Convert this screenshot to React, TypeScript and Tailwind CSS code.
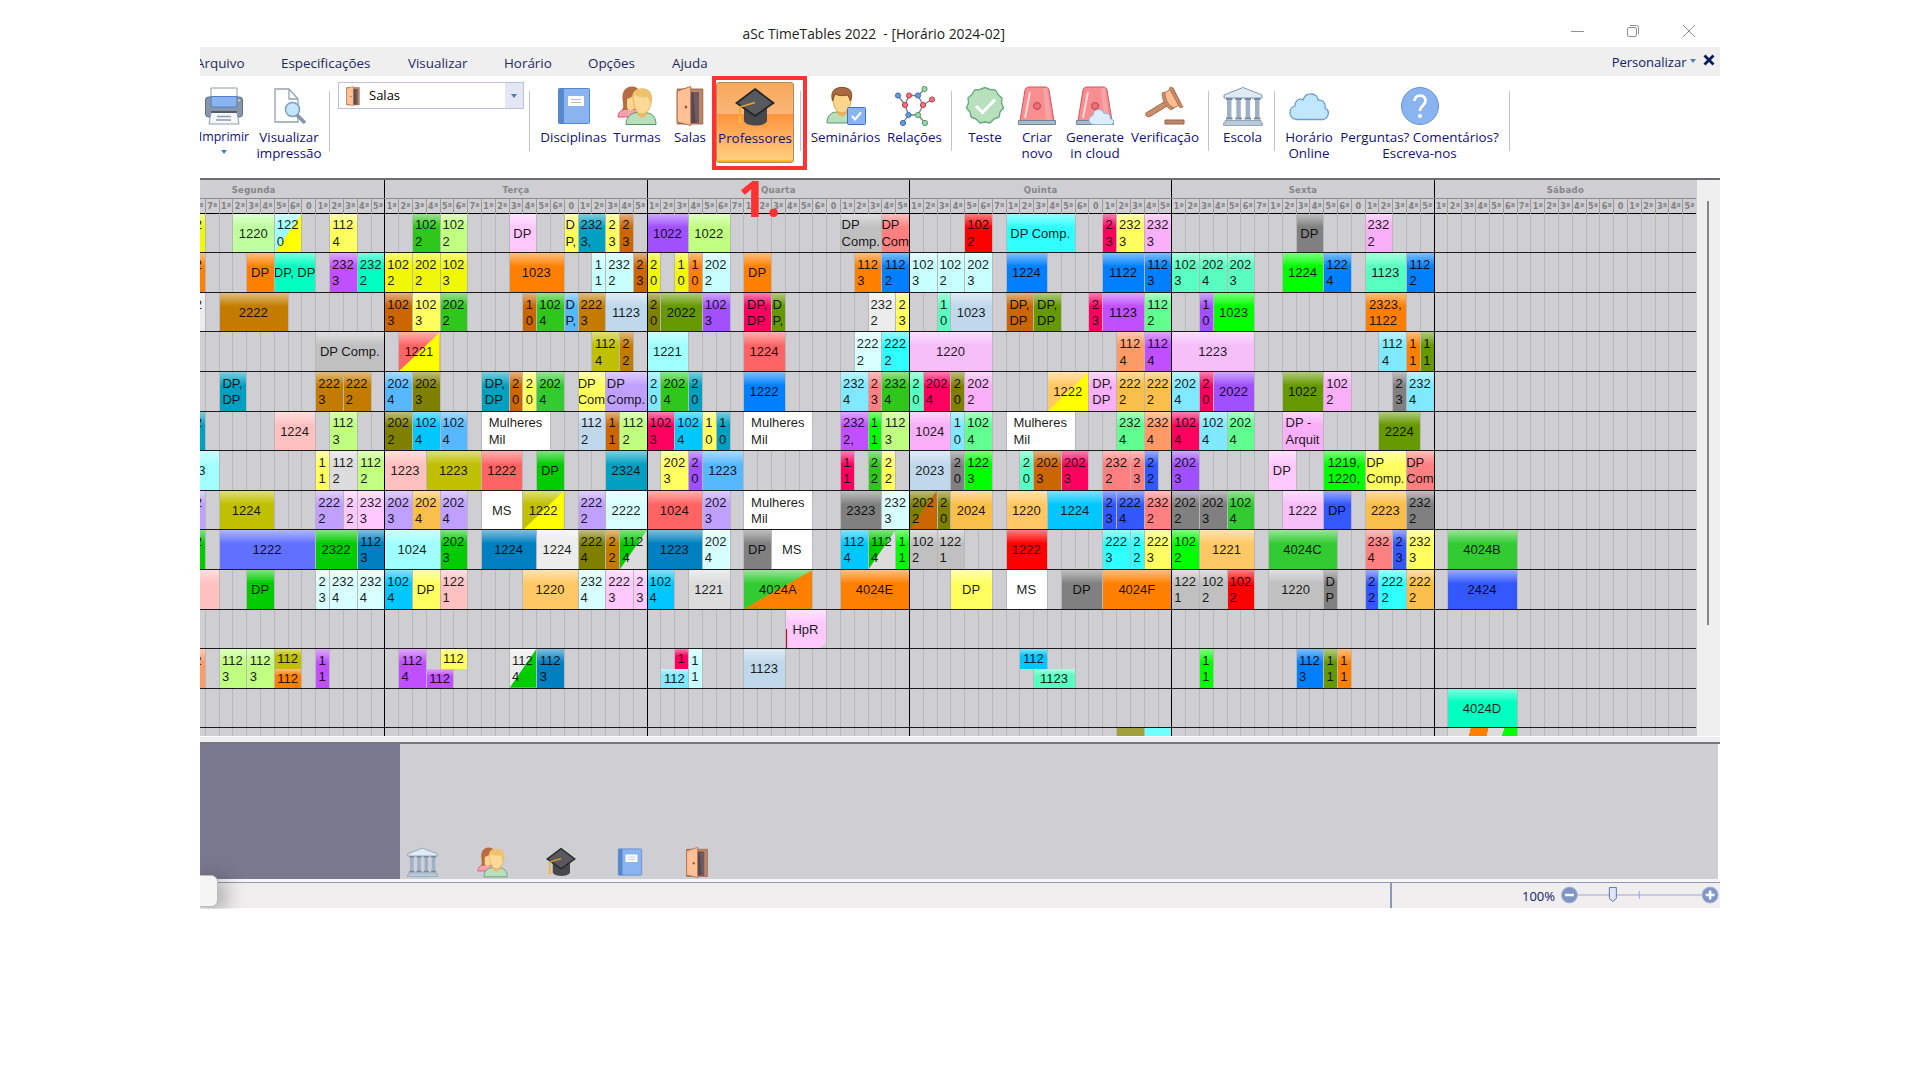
import React from "react";

/* Colour keys used by the timetable cards */
const BG: Record<string, string> = {
  y: "bg-[#f0f808]", g: "bg-[#bfff9f]", Y: "bg-[#ffff60]", G: "bg-[#2fc71c]", l: "bg-[#c0ff80]", p: "bg-[#ffc8ff]",
  t: "bg-[#00a0c0]", b: "bg-[#cc6600]", v: "bg-[#a050ff]", s: "bg-[#c0c0c0]", r: "bg-[#ff8080]", R: "bg-[#ff0000]",
  c: "bg-[#30ffff]", m: "bg-[#ff0060]", k: "bg-[#fab0f8]", d: "bg-[#808080]", o: "bg-[#ff8000]", a: "bg-[#00ffc0]",
  V: "bg-[#c050ff]", i: "bg-[#c8ffff]", u: "bg-[#0080ff]", q: "bg-[#58ffc0]", L: "bg-[#00ff00]", w: "bg-[#ececec]",
  n: "bg-[#c47c00]", B: "bg-[#58b8ff]", e: "bg-[#c0d8ec]", O: "bg-[#808000]", M: "bg-[#669900]", j: "bg-[#60ff90]",
  f: "bg-[#ff6464]", z: "bg-[#ffff00]", C: "bg-[#c0c000]", A: "bg-[#a0ffff]", I: "bg-[#d8ffff]", K: "bg-[#f6bffa]",
  h: "bg-[#ff9966]", x: "bg-[#80e8ff]", E: "bg-[#32cc32]", P: "bg-[#c0a0ff]", N: "bg-[#ffc864]", T: "bg-[#fabe4b]",
  F: "bg-[#ffc0c0]", S: "bg-[#00c8ff]", W: "bg-[#ffffff]", D: "bg-[#dcdcdc]", H: "bg-[#00cc00]", U: "bg-[#3358ff]",
  J: "bg-[#6070ff]", Q: "bg-[#0080c0]",
};

/* One entry per room; days split by " ; ", cards by " / ": start end colour(s) text.
   A ^ or _ after the colour puts the card in the upper or lower half of the row. */
const ROWS: string[] = [
  "4 6 y 102|2 / 8 11 g 1220 / 11 13 Az 122|0 / 15 17 Y 112|4 ; 2 4 G 102|2 / 4 6 l 102|2 / 9 11 p DP / 13 14 Y D|P, / 14 16 t 232|3, / 16 17 Y 2|3 / 17 18 b 2|3 ; 0 3 v 1022 / 3 6 l 1022 / 14 17 s DP|Comp. / 17 19 r DP|Com ; 4 6 R 102|2 / 7 12 c DP Comp. / 14 15 m 2|3 / 15 17 Y 232|3 / 17 19 k 232|3 ; 9 11 d DP / 14 16 k 232|2 ; ",
  "4 6 o 102|2 / 9 11 o DP / 11 14 a DP, DP / 15 17 V 232|3 / 17 19 a 232|2 ; 0 2 y 102|2 / 2 4 y 202|2 / 4 6 y 102|3 / 9 13 o 1023 / 15 16 i 1|1 / 16 18 i 232|2 / 18 19 b 2|3 ; 0 1 y 2|0 / 2 3 y 1|0 / 3 4 o 1|0 / 4 6 i 202|2 / 7 9 o DP / 15 17 o 112|3 / 17 19 u 112|2 ; 0 2 i 102|3 / 2 4 i 102|2 / 4 6 i 202|3 / 7 10 u 1224 / 14 17 u 1122 / 17 19 u 112|3 ; 0 2 q 102|3 / 2 4 q 202|4 / 4 6 q 202|3 / 8 11 L 1224 / 11 13 u 122|4 / 14 17 q 1123 / 17 19 u 112|2 ; ",
  "4 6 w 102|2 / 7 12 n 2222 ; 0 2 b 102|3 / 2 4 Y 102|3 / 4 6 G 202|2 / 10 11 b 1|0 / 11 13 G 102|4 / 13 14 B D|P, / 14 16 n 222|3 / 16 19 e 1123 ; 0 1 O 2|0 / 1 4 M 2022 / 4 6 v 102|3 / 7 9 m DP,|DP / 9 10 M D|P, / 16 18 w 232|2 / 18 19 Y 2|3 ; 2 3 q 1|0 / 3 6 e 1023 / 7 9 b DP,|DP / 9 11 M DP,|DP / 13 14 m 2|3 / 14 17 V 1123 / 17 19 j 112|2 ; 2 3 v 1|0 / 3 6 L 1023 / 14 17 o 2323,|1122 ; ",
  "14 19 s DP Comp. ; 1 4 fz 1221 / 15 17 C 112|4 / 17 18 n 2|2 ; 0 3 A 1221 / 7 10 f 1224 / 15 17 I 222|2 / 17 19 c 222|2 ; 0 6 K 1220 / 15 17 h 112|4 / 17 19 V 112|4 ; 0 6 K 1223 / 15 17 x 112|4 / 17 18 o 1|1 / 18 19 M 1|1 ; ",
  "7 9 t DP,|DP / 14 16 n 222|3 / 16 18 n 222|2 ; 0 2 B 202|4 / 2 4 O 202|3 / 7 9 t DP,|DP / 9 10 b 2|0 / 10 11 Y 2|0 / 11 13 E 202|4 / 14 16 Y DP|Com / 16 19 P DP|Comp. ; 0 1 x 2|0 / 1 3 G 202|4 / 3 4 t 2|0 / 7 10 u 1222 / 14 16 x 232|4 / 16 17 r 2|3 / 17 19 G 232|4 ; 0 1 q 2|0 / 1 3 m 202|4 / 3 4 O 2|0 / 4 6 k 202|2 / 10 13 Nz 1222 / 13 15 k DP,|DP / 15 17 T 222|2 / 17 19 T 222|2 ; 0 2 x 202|4 / 2 3 m 2|0 / 3 6 v 2022 / 8 11 M 1022 / 11 13 k 102|2 / 16 17 d 2|3 / 17 19 x 232|4 ; ",
  "4 6 t 102|2 / 11 14 F 1224 / 15 17 l 112|3 ; 0 2 O 202|2 / 2 4 S 102|4 / 4 6 B 102|4 / 7 12 W Mulheres|Mil / 14 16 e 112|2 / 16 17 b 1|1 / 17 19 l 112|2 ; 0 2 m 102|3 / 2 4 S 102|4 / 4 5 Y 1|0 / 5 6 t 1|0 / 7 12 W Mulheres|Mil / 14 16 V 232|2, / 16 17 L 1|1 / 17 19 l 112|3 ; 0 3 k 1024 / 3 4 x 1|0 / 4 6 j 102|4 / 7 12 W Mulheres|Mil / 15 17 j 232|4 / 17 19 h 232|4 ; 0 2 m 102|4 / 2 4 x 102|4 / 4 6 j 202|4 / 8 11 k DP -|Arquit / 15 18 M 2224 ; ",
  "3 7 A 1223 / 14 15 Y 1|1 / 15 17 D 112|2 / 17 19 l 112|2 ; 0 3 F 1223 / 3 7 C 1223 / 7 10 f 1222 / 11 13 H DP / 16 19 t 2324 ; 1 3 Y 202|3 / 3 4 v 2|0 / 4 7 B 1223 / 14 15 m 1|1 / 16 17 G 2|2 / 17 18 Y 2|2 ; 0 3 e 2023 / 3 4 d 2|0 / 4 6 L 122|3 / 8 9 q 2|0 / 9 11 b 202|3 / 11 13 m 202|3 / 14 16 r 232|2 / 16 17 r 2|3 / 17 18 U 2|2 ; 0 2 v 202|3 / 7 9 p DP / 11 14 L 1219,|1220, / 14 17 Y DP|Comp. / 17 19 r DP|Com ; ",
  "4 6 P 222|2 / 7 11 C 1224 / 14 16 P 222|2 / 16 17 p 2|2 / 17 19 p 232|3 ; 0 2 P 202|3 / 2 4 T 202|4 / 4 6 P 202|4 / 7 10 W MS / 10 13 Cz 1222 / 14 16 P 222|2 / 16 19 I 2222 ; 0 4 f 1024 / 4 6 P 202|3 / 7 12 W Mulheres|Mil / 14 17 d 2323 / 17 19 I 232|3 ; 0 2 Ob 202|2 / 2 3 O 2|0 / 3 6 T 2024 / 7 10 N 1220 / 10 14 S 1224 / 14 15 U 2|3 / 15 17 U 222|4 / 17 19 r 232|2 ; 0 2 d 202|2 / 2 4 d 202|3 / 4 6 E 102|4 / 8 11 K 1222 / 11 13 U DP / 14 17 T 2223 / 17 19 d 232|2 ; ",
  "4 6 H 202|2 / 7 14 J 1222 / 14 17 H 2322 / 17 19 Q 112|3 ; 0 4 A 1024 / 4 6 H 202|3 / 7 11 Q 1224 / 11 14 w 1224 / 14 16 O 222|4 / 16 17 n 2|2 / 17 19 HD 112|4 ; 0 4 Q 1223 / 4 6 I 202|4 / 7 9 d DP / 9 12 W MS / 14 16 S 112|4 / 16 18 HD 112|4 / 18 19 L 1|1 ; 0 2 s 102|2 / 2 4 s 122|1 / 7 10 R 1222 / 14 16 c 222|3 / 16 17 c 2|2 / 17 19 Y 222|3 ; 0 2 L 102|2 / 2 6 N 1221 / 7 12 E 4024C / 14 16 r 232|4 / 16 17 U 2|3 / 17 19 Y 232|3 ; 1 6 E 4024B",
  "3 7 F / 9 11 H DP / 14 15 I 2|3 / 15 17 I 232|4 / 17 19 I 232|4 ; 0 2 S 102|4 / 2 4 Y DP / 4 6 F 122|1 / 10 14 N 1220 / 14 16 I 232|4 / 16 18 p 222|3 / 18 19 p 2|3 ; 0 2 S 102|4 / 3 6 D 1221 / 7 12 Eo 4024A / 14 19 o 4024E ; 3 6 Y DP / 7 10 W MS / 11 14 d DP / 14 19 o 4024F ; 0 2 s 122|1 / 2 4 s 102|2 / 4 6 R 102|2 / 7 11 s 1220 / 11 12 d D|P / 14 15 U 2|2 / 15 17 c 222|2 / 17 19 T 222|2 ; 1 6 U 2424",
  " ; ; 10 13 p HpR ; ; ; ",
  "4 6 h 112|2 / 7 9 l 112|3 / 9 11 l 112|3 / 11 13 C^ 112 / 11 13 o_ 112 / 14 15 V 1|1 ; 1 3 V 112|4 / 3 5 V_ 112 / 4 6 Y^ 112 / 9 11 wH 112|4 / 11 13 Q 112|3 ; 1 3 x_ 112 / 2 3 m^ 1 / 3 4 i 1|1 / 7 10 e 1123 ; 8 10 S^ 112 / 9 12 q_ 1123 ; 2 3 L 1|1 / 9 11 u 112|3 / 11 12 M 1|1 / 12 13 o 1|1 ; ",
  " ; ; ; ; ; 1 6 a 4024D",
];

const DAYS = ["Segunda", "Terça", "Quarta", "Quinta", "Sexta", "Sábado"];
const SLOTS = ["1", "2", "3", "4", "5", "6", "7", "1", "2", "3", "4", "5", "6", "0", "1", "2", "3", "4", "5"];

type CardData = { col: number; span: number; colors: string; half: string; lines: string[] };

function parseRow(row: string): CardData[] {
  return row.split(";").flatMap((day, d) =>
    day
      .split(" / ")
      .map((s) => s.trim())
      .filter(Boolean)
      .map((s) => {
        const [a, b, key, ...rest] = s.split(" ");
        return {
          col: d * 19 + Number(a) + 1,
          span: Number(b) - Number(a),
          colors: key.replace(/[\^_]/g, ""),
          half: key.includes("^") ? "^" : key.includes("_") ? "_" : "",
          lines: rest.join(" ").split("|"),
        };
      })
  );
}

function Card({ card }: { card: CardData }) {
  const place = card.half === "^" ? "self-start h-1/2" : card.half === "_" ? "self-end h-1/2" : "h-full";
  const hpr = card.lines[0] === "HpR";
  return (
    <div
      className={`relative ml-px flex min-w-0 items-center justify-center overflow-hidden ${place} ${BG[card.colors[0]]}`}
      style={{ gridColumn: `${card.col} / span ${card.span}`, gridRow: 1 }}
    >
      <div className="absolute inset-0 bg-linear-to-b from-white/50 to-transparent to-35%" />
      {card.colors[1] && (
        <div className={`absolute inset-0 [clip-path:polygon(100%_0,100%_100%,0_100%)] ${BG[card.colors[1]]}`} />
      )}
      {hpr && (
        <>
          <div className="absolute bottom-0 left-0 h-1/2 w-px bg-red-600" />
          <div className="absolute right-0 bottom-0 size-[6px] bg-[#cfced3] [clip-path:polygon(100%_0,100%_100%,0_100%)]" />
        </>
      )}
      <div className="relative pt-[1.500px] pr-px text-[13px] leading-[16.3px] whitespace-nowrap text-black/90">
        {card.lines.map((l, i) => (
          <div key={i}>{l}</div>
        ))}
      </div>
    </div>
  );
}

/* ---------- icons ---------- */
const Svg = ({ children, cls = "size-[40px]", box = "0 0 40 40" }: { children: React.ReactNode; cls?: string; box?: string }) => (
  <svg viewBox={box} preserveAspectRatio="none" className={`block shrink-0 ${cls}`} fill="none">{children}</svg>
);

const Printer = () => (
  <Svg>
    <path d="M7 2h26v10H7z" fill="#fff" stroke="#8c9cad" />
    <rect x="1.500" y="11" width="37" height="20" rx="3" fill="#8796ab" stroke="#5f7084" />
    <path d="M7 10.500h26v8a2.500 2.500 0 0 1-2.500 2.500h-21a2.500 2.500 0 0 1-2.500-2.500z" fill="#8ab4f0" stroke="#4c7fc8" />
    <circle cx="35" cy="14.500" r="1" fill="#ffe27a" />
    <path d="M7 26h26l2 12H5z" fill="#f6f8fa" stroke="#8c9cad" />
    <path d="M7 26h26" stroke="#4f5d6c" strokeWidth="2" />
    <path d="M13 30.500h14M12 34h15" stroke="#8c9cad" strokeWidth="1.500" />
  </Svg>
);
const Preview = () => (
  <Svg>
    <path d="M6 3h14l9 10v23H6z" fill="#fff" stroke="#93a1b0" strokeWidth="1.300" />
    <path d="M20 3v10h9" stroke="#93a1b0" strokeWidth="1.300" />
    <path d="m28 29 8 8" stroke="#8594a8" strokeWidth="3.500" />
    <circle cx="23.500" cy="23.500" r="7" fill="#c3e6fd" stroke="#7e9cc0" strokeWidth="1.500" />
  </Svg>
);
const Book = ({ cls }: { cls?: string }) => (
  <Svg cls={cls}>
    <rect x="4.500" y="2.500" width="31" height="35" rx="1" fill="#8ab4ef" stroke="#5486cc" />
    <path d="M4.500 2.500H10v35H4.500z" fill="#5688cd" />
    <rect x="14" y="10" width="16" height="10" fill="#fff" />
    <path d="M17 13.500h10M17 16.500h10" stroke="#a9bfdb" />
  </Svg>
);
const People = ({ cls }: { cls?: string }) => (
  <Svg cls={cls}>
    <path d="M1 31c0-6 5-8 11-8l10 1v7z" fill="#f7a3ad" stroke="#d9556b" />
    <path d="M5 24C8 19 4 14 6 7 9-2 21-1 23 6c3 8 0 14-5 17z" fill="#b86b42" />
    <path d="M10 13c4-1 6-4 9-4v13l-6 3-3-3z" fill="#fbd58b" />
    <path d="M9 38.500c0-8 5-11 10-12h10c6 1 10 4 10 12z" fill="#b9e0bd" stroke="#559568" />
    <path d="M20 24v5l5 3 5-3v-5z" fill="#eeb968" />
    <path d="M16 13C15 6 19 3 24 3c9-1 12 6 10 14-1 6-4 11-9 11s-8-6-9-15z" fill="#fdd998" stroke="#dfb565" />
    <path d="M15.500 14C14 3 23 2 28 3c7 1 7 9 5 15l-2-7c-5 1-11 0-13-2z" fill="#ecc36c" />
  </Svg>
);
const Door = ({ cls }: { cls?: string }) => (
  <Svg cls={cls}>
    <path d="M4 3h32v35H4z" fill="#bf8769" stroke="#955f44" />
    <path d="M12 6h19v31H12z" fill="#55474c" />
    <path d="M24 6h7v31h-4z" fill="#6e5a60" />
    <path d="M4 5 21 .500V39.500L4 36z" fill="#ffc096" stroke="#a86748" />
    <circle cx="15" cy="21" r="1.600" fill="#8c5438" />
  </Svg>
);
const Cap = ({ cls }: { cls?: string }) => (
  <Svg cls={cls}>
    <path d="M9 20v14c2 6 21 6 23 0V20z" fill="#47484b" />
    <path d="M20 2 38.500 16 20 29 1.500 16z" fill="#58595c" stroke="#232426" strokeWidth="1.700" />
    <path d="M20 15.500 5 20v14" stroke="#e9a42c" strokeWidth="1.600" />
    <path d="m5 24-1.800 12h4z" fill="#f5b43c" />
  </Svg>
);
const Seminar = () => (
  <Svg>
    <path d="M1 37c0-8 5-11 10-11h10c5 0 9 3 9 11z" fill="#b9e0bd" stroke="#559568" />
    <path d="M11 22v6l5 3 5-3v-6z" fill="#e9b560" />
    <path d="M7 13c0-7 3-9 9-9 7 0 9 3 9 9 0 8-4 14-9 14S7 21 7 13z" fill="#fbd58b" stroke="#d6a557" />
    <path d="M6.500 15C4 5 9 1 17 1.500 26 2 27 8 24.500 15L22 9c-5 1-9 1-13-1z" fill="#a9693f" stroke="#854c29" />
    <rect x="21.500" y="21.500" width="18" height="17" rx="1" fill="#8ab4f5" stroke="#3f71bd" />
    <path d="m26 30 3 3.500 6-7" stroke="#fff" strokeWidth="2" />
  </Svg>
);
const Relations = () => (
  <Svg>
    <path d="M3 9.500 10 19M14 9.500h9M30 3l-7 6.500M37 13.500 28 19M10 19l4-9.500M23 9.500 28 19M10 19l3.500 10M28 19l-5 10M13.500 29H23M13.500 29 8 37M23 29l7 8" stroke="#777e89" strokeWidth="1.300" />
    {[[3, 9.5], [23, 9.5], [13.5, 29], [8, 37]].map(([x, y]) => <circle key={x} cx={x} cy={y} r="2.600" fill="#669be0" stroke="#3d6cab" />)}
    {[[14, 9.5], [10, 19], [28, 19], [37, 13.5]].map(([x, y]) => <circle key={x} cx={x} cy={y} r="2.600" fill="#f27480" stroke="#bd3e4b" />)}
    {[[29.5, 3], [23, 29], [30, 37]].map(([x, y]) => <circle key={x} cx={x} cy={y} r="2.600" fill="#9ad6a6" stroke="#529b68" />)}
  </Svg>
);
const Badge = () => (
  <Svg>
    <path d="m20 1.500 5 2 5.500.500 2.500 4.500 4 3.500-.500 5 2 5-3.500 4-1 5-5 2-4 4-5-1-5 1-4-4-5-2-1-5L1.500 22l2-5L3 12l4-3.500L9.500 4 15 3.500z" fill="#b9e0bd" stroke="#69aa80" strokeWidth="1.400" strokeLinejoin="round" />
    <path d="m11 20 6.500 6.500L30 13.500" stroke="#fff" strokeWidth="3" />
  </Svg>
);
const Siren = ({ cloud = false }: { cloud?: boolean }) => (
  <Svg>
    <path d="M3 35 8 4c.500-2 2-3 4-3h16c2 0 3.500 1 4 3l5 31z" fill="#f98e91" stroke="#d25662" />
    <path d="M26 2h4l4 32h-5z" fill="#f4a5a5" />
    <path d="M13 6 8 32" stroke="#ffdada" strokeWidth="2" />
    <circle cx="20" cy="20" r="3.500" fill="#ef6f76" stroke="#c4404e" />
    <path d="M1.500 34.500h37v4h-37z" fill="#a9bac9" stroke="#71859a" />
    {cloud && <path d="M19 38.500c-6 0-7-8-1-9 0-7 9-8 11-2 5-1 7 3 6 5 5 1 4 6 1 6z" fill="#dcedfd" stroke="#8fb5dd" />}
  </Svg>
);
const Gavel = () => (
  <Svg>
    <path d="m1 27 18-11 3 4L5 30.500c-3 1-5-1-4-3.500z" fill="#c98f6b" stroke="#a0684b" />
    <path d="m19 7 9-5 8 16-9 5c-5-3-8-9-8-16z" fill="#ffbe92" stroke="#b87650" />
    <path d="m24 2 3-1 11 20-3 1zM17 7l3-1c0 7 3 13 9 16l-3 2c-6-4-9-10-9-17z" fill="#c98a65" stroke="#a0684b" strokeWidth=".700" />
    <path d="M20 34h19v4H20z" fill="#bf8767" stroke="#99634a" />
  </Svg>
);
const Museum = ({ cls }: { cls?: string }) => (
  <Svg cls={cls}>
    <path d="M1 9 20 1.500 39 9v3H1z" fill="#e0eaf3" stroke="#8297ad" />
    {[4, 13.3, 22.6, 32].map((x) => (
      <g key={x}>
        <path d={`M${x} 13h4.500v20H${x}z`} fill="#9db0c6" />
        <path d={`M${x - 1} 13h6.500M${x - 1} 32.500h6.500`} stroke="#74899f" strokeWidth="2" />
      </g>
    ))}
    <path d="M2 34.500h36v2.500h1.500v2.500H.500V37H2z" fill="#b9cada" stroke="#8297ad" strokeWidth=".800" />
  </Svg>
);
const Cloud = () => (
  <Svg>
    <path d="M8 33.500C-1 33-1 22 6 20c0-6 5-8 8-6 3-9 15-7 15 0 5-1 8 4 7 8 6 3 3 11-2 11.500z" fill="#c1e7ff" stroke="#6f9cd0" strokeWidth="1.300" />
  </Svg>
);
const Help = () => (
  <Svg>
    <circle cx="20" cy="20" r="18.500" fill="#8ab4f0" stroke="#6592d2" />
    <path d="M14.500 15c0-7 11-7 11-.500 0 5-5.500 5-5.500 10.500" stroke="#fff" strokeWidth="2.800" />
    <circle cx="20" cy="30" r="2" fill="#fff" />
  </Svg>
);

const Tri = ({ cls = "" }: { cls?: string }) => (
  <svg viewBox="0 0 6 4" className={`block h-[4px] w-[6px] ${cls}`}><path d="M0 0h6L3 4z" fill="#4a7cb8" /></svg>
);
const Sep = ({ cls = "" }: { cls?: string }) => <div className={`mt-[15px] h-[60px] w-px shrink-0 bg-[#c3c3c7] ${cls}`} />;

function Tool({ cls, icon, lines, arrow }: { cls: string; icon: React.ReactNode; lines: string[]; arrow?: boolean }) {
  return (
    <div className={`flex shrink-0 flex-col items-center pt-[9.500px] leading-4 whitespace-nowrap text-[#10107c] ${arrow ? "text-[12.400px]" : "text-[13.400px]"} ${cls}`}>
      {icon}
      <div className="mt-[3.500px] text-center">
        {lines.map((l) => <div key={l}>{l}</div>)}
      </div>
      {arrow && <Tri cls="mt-[5px]" />}
    </div>
  );
}

function TitleBar() {
  return (
    <div className="relative flex h-[47px] items-center justify-center pt-[20px] text-[13.800px] leading-4 text-[#222]">
      <span className="relative left-[-86px] whitespace-pre">aSc TimeTables 2022  - [Horário 2024-02]</span>
      <svg className="absolute top-[23px] right-[24px] h-[16px] w-[126px]" viewBox="0 0 126 16" fill="none" stroke="#909090">
        <path d="M1 8.500h13M113 2l12 12M125 2l-12 12" />
        <rect x="57.500" y="4.500" width="9" height="9" rx="1.500" />
        <path d="M60 2.500h6.500a2 2 0 0 1 2 2V11" />
      </svg>
    </div>
  );
}

function MenuBar() {
  return (
    <div className="flex h-[29px] items-center bg-[#efefef] pt-[4px] text-[13.400px] text-[#1c2a5e]">
      <span className="ml-[-4px] w-[85px]">Arquivo</span>
      <span className="w-[127px]">Especificações</span>
      <span className="w-[96px]">Visualizar</span>
      <span className="w-[84px]">Horário</span>
      <span className="w-[84px]">Opções</span>
      <span>Ajuda</span>
      <span className="mt-[-2px] ml-auto text-[13px] text-[#10206c]">Personalizar</span>
      <Tri cls="mr-[4px] ml-[3px] mt-[-6px]" />
      <svg viewBox="0 0 12 12" className="mr-[5px] ml-[3px] size-[12px] -translate-y-[4px]"><path d="m1.500 1.500 9 9M10.500 1.500l-9 9" stroke="#0c1c58" strokeWidth="2.800" /></svg>
    </div>
  );
}

function Ribbon() {
  return (
    <div className="flex h-[102px] items-start overflow-hidden">
      <Tool cls="w-[48px]" icon={<Printer />} lines={["Imprimir"]} arrow />
      <Tool cls="ml-px w-[80px]" icon={<Preview />} lines={["Visualizar", "impressão"]} />
      <Sep />
      <div className="mt-[6px] ml-[8px] flex h-[27px] w-[186px] shrink-0 items-center border border-[#b9c1dc] bg-white text-[13px] text-black">
        <Door cls="ml-[6px] h-[20px] w-[16px]" />
        <span className="ml-[8px] pt-px">Salas</span>
        <div className="ml-auto flex h-full w-[18px] items-center justify-center bg-[#e4e7f3]"><Tri /></div>
      </div>
      <Sep cls="ml-[5px]" />
      <Tool cls="ml-[8px] w-[71px]" icon={<Book />} lines={["Disciplinas"]} />
      <Tool cls="w-[56px]" icon={<People />} lines={["Turmas"]} />
      <Tool cls="w-[50px]" icon={<Door cls="h-[40px] w-[32px]" />} lines={["Salas"]} />
      <div className="mt-[6px] ml-px h-[81px] w-[78px] shrink-0 rounded-[3px] border border-[#b08a58] bg-linear-to-b from-[#f5a95c] via-[#fdb678] via-40% to-[#ffa73e]">
        <div className="h-[32px]" />
        <div className="h-[47px] rounded-b-[2px] bg-linear-to-b from-[#ff9237] to-[#ffd081] shadow-[inset_0_-1px_0_#ffb627]">
          <Tool cls="relative -top-[37px] -mt-px w-[76px]" icon={<Cap />} lines={["Professores"]} />
        </div>
      </div>
      <Sep cls="ml-[6px]" />
      <Tool cls="ml-[7px] w-[75px]" icon={<Seminar />} lines={["Seminários"]} />
      <Tool cls="w-[63px]" icon={<Relations />} lines={["Relações"]} />
      <Sep cls="ml-[5px]" />
      <Tool cls="ml-[9px] w-[48px]" icon={<Badge />} lines={["Teste"]} />
      <Tool cls="w-[56px]" icon={<Siren />} lines={["Criar", "novo"]} />
      <Tool cls="w-[60px]" icon={<Siren cloud />} lines={["Generate", "in cloud"]} />
      <Tool cls="w-[80px]" icon={<Gavel />} lines={["Verificação"]} />
      <Sep cls="ml-[3px]" />
      <Tool cls="ml-[2px] w-[63px]" icon={<Museum />} lines={["Escola"]} />
      <Sep />
      <Tool cls="ml-[4px] w-[60px]" icon={<Cloud />} lines={["Horário", "Online"]} />
      <Tool cls="w-[161px]" icon={<Help />} lines={["Perguntas? Comentários?", "Escreva-nos"]} />
      <Sep cls="ml-[9px]" />
    </div>
  );
}

function Timetable() {
  return (
    <div className="flex h-[556px] bg-[#efefef]">
      <div className="h-full w-[1496.500px] overflow-hidden bg-[#cfced3]">
        <div className="relative ml-[-78px] w-[1574px]">
          <div className="grid h-[18.500px] grid-cols-6 border-b border-[#8c8c8c] font-['DejaVu_Sans'] text-[8.500px] font-bold text-[#858585]">
            {DAYS.map((d) => (
              <div key={d} className="flex items-center justify-center border-l border-black pt-[3px] tracking-[0.3px]">{d}</div>
            ))}
          </div>
          <div className="grid h-[15.200px] grid-cols-[repeat(114,minmax(0,1fr))] border-b border-black font-['DejaVu_Sans'] text-[8px] leading-[16.500px] font-bold text-[#808080]">
            {DAYS.flatMap((d) =>
              SLOTS.map((s, i) => (
                <div key={d + i} className={`border-l text-center whitespace-nowrap ${i === 0 ? "border-black" : "border-[#9a9a9a]"}`}>
                  {s === "0" ? "0" : s + "ª"}
                </div>
              ))
            )}
          </div>
          <div className="relative">
            <div className="absolute inset-x-0 top-0 grid h-[523px] grid-cols-[repeat(114,minmax(0,1fr))]">
              {DAYS.flatMap((d) =>
                SLOTS.map((_, i) => <div key={d + i} className={i === 0 ? "border-l border-black" : "border-l border-[#b7b7b9]"} />)
              )}
            </div>
            {ROWS.map((r, i) => (
              <div key={i} className="relative grid h-[39.600px] grid-cols-[repeat(114,minmax(0,1fr))] grid-rows-[100%] border-b border-[#1c1c1c]">
                {parseRow(r).map((c, j) => <Card key={j} card={c} />)}
              </div>
            ))}
            <div className="relative grid h-[8px] grid-cols-[repeat(114,minmax(0,1fr))]">
              <div className="col-span-2 col-start-73 ml-px bg-[#a2a03c]" />
              <div className="col-span-2 col-start-75 ml-px bg-[#70ffff]" />
              <div className="col-span-5 col-start-97 ml-px bg-[linear-gradient(105deg,#dcdcdc_32%,#ff8000_32%,#ff8000_57%,#dcdcdc_57%,#dcdcdc_79%,#00ff00_79%)]" />
            </div>
          </div>
        </div>
      </div>
      <div className="mt-[21px] ml-[10px] h-[424px] w-[2px] bg-[#868686]" />
    </div>
  );
}

function StatusBar() {
  return (
    <div className="relative flex h-[26px] items-center border-t border-[#8f98b8] bg-[#f0eeee] text-[13px] text-[#10206c]">
      <div className="ml-[1190px] h-full w-[2px] bg-[#8f98b8]" />
      <span className="ml-[130px] w-[38px] pt-[2px]">100%</span>
      <svg viewBox="0 0 160 20" className="h-[20px] w-[160px]" fill="none">
        <path d="M18 9h125" stroke="#9aa9cc" />
        <circle cx="9.500" cy="9" r="8" fill="#7f95c4" stroke="#a9b6d4" />
        <path d="M5 9h9" stroke="#fff" strokeWidth="2.500" />
        <path d="M49.500 1.500h7v11l-3.500 3-3.500-3z" fill="#dfe6f5" stroke="#5f78b0" />
        <path d="M79.500 5v8" stroke="#9aa9cc" />
        <circle cx="150.500" cy="9" r="8" fill="#7f95c4" stroke="#a9b6d4" />
        <path d="M146 9h9M150.500 4.500v9" stroke="#fff" strokeWidth="2.500" />
      </svg>
      <div className="absolute top-[-8px] left-[-10px] h-[32px] w-[28px] rounded-[7px] border border-[#bbb] bg-[#f5f5f5] shadow-[8px_4px_20px_rgba(0,0,0,0.3)]" />
    </div>
  );
}

export default function App() {
  return (
    <div className="h-[1080px] w-[1920px] overflow-hidden bg-white">
      <div className="relative ml-[200px] h-[909px] w-[1519.500px] overflow-hidden font-['Open_Sans',sans-serif]">
        <TitleBar />
        <MenuBar />
        <Ribbon />
        <div className="h-[2px] bg-[#6f6d6f]" />
        <div className="font-['Liberation_Sans',sans-serif]"><Timetable /></div>
        <div className="h-[6px] border-t border-white bg-[#efefef]" />
        <div className="h-[2px] bg-[#77767a]" />
        <div className="flex h-[135px] w-[1518px] bg-[#cfced3]">
          <div className="h-full w-[200px] bg-[#79798e]" />
          <div className="mt-[103px] flex h-[30px]">
            <Museum cls="ml-[7px] h-[30px] w-[31px]" />
            <People cls="ml-[39px] h-[31px] w-[31px]" />
            <Cap cls="ml-[38px] h-[30px] w-[30px]" />
            <Book cls="ml-[39px] h-[30px] w-[30px]" />
            <Door cls="ml-[39px] h-[31px] w-[26px]" />
          </div>
        </div>
        <div className="h-[3px] bg-[#f6f6f6]" />
        <StatusBar />
        <div className="absolute top-[76px] left-[512px] h-[94px] w-[95px] border-4 border-[#ff3131]" />
        <div className="absolute top-[164px] left-[538px] text-[50px] leading-[68px] font-bold text-[#ff3131]">1.</div>
      </div>
    </div>
  );
}
